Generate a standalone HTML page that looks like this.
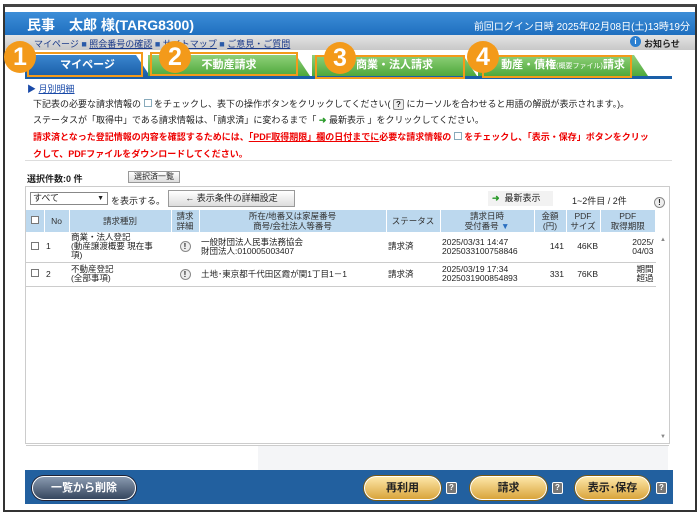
<!DOCTYPE html>
<html><head><meta charset="utf-8"><style>
*{margin:0;padding:0;box-sizing:border-box}
body{width:700px;height:514px;background:#fff;font-family:"Liberation Sans","Noto Sans CJK JP",sans-serif;position:relative;overflow:hidden;color:#222}
.a{position:absolute;white-space:nowrap}
.frame{left:3px;top:4px;width:694px;height:508px;border:2px solid #333;border-top:3px solid #444}
.hdr{left:5px;top:12px;width:690px;height:23px;background:linear-gradient(#3d8ed8,#1f6fbf)}
.links{left:5px;top:35px;width:690px;height:15px;background:linear-gradient(#e4e4e4,#c8c8c8)}
.tab{position:absolute;top:55px;height:21px;color:#fff;font-size:11px;font-weight:bold;text-align:center;line-height:21px;clip-path:polygon(0 0,calc(100% - 14px) 0,100% 100%,0 100%)}
.g{background:linear-gradient(#8fd07a,#4ea83a)}
.orng{position:absolute;border:2.5px solid #f39a1a}
.circ{position:absolute;width:32px;height:32px;border-radius:50%;background:#f39a1a;color:#fff;font-size:25px;font-weight:bold;text-align:center;line-height:32px;font-family:"Liberation Sans",sans-serif}
.t{font-size:9px}
.red{color:#e00;font-weight:bold;font-size:9px}
.btn{position:absolute;border:1px solid #999;background:linear-gradient(#fff,#ddd);font-size:9px;text-align:center}
table{border-collapse:collapse;font-size:8.5px}
th{background:#bcd8ee;font-weight:normal;border-right:1px solid #fff;line-height:10px;color:#333}
td{border-bottom:1px solid #ccc;line-height:9px;padding:1px 2px;vertical-align:middle}
.ex{display:inline-block;width:11px;height:11px;border:1px solid #888;border-radius:50%;font-size:8px;line-height:9px;text-align:center;font-weight:bold;background:#eee}
.cb{display:inline-block;width:8px;height:8px;border:1px solid #777;background:#fff}
.pill{position:absolute;top:476px;height:24px;border-radius:12px;font-size:11px;font-weight:bold;text-align:center;line-height:22px}
.gold{background:linear-gradient(#fde7a8,#d9a43c);border:1.5px solid #fff;color:#222;box-shadow:0 0 0 1px #7a5a10}
.q{position:absolute;top:482px;width:11px;height:12px;background:#777;border:1px solid #fff;color:#fff;font-size:8px;text-align:center;line-height:10px;font-weight:bold;border-radius:2px}
</style></head><body>
<div class="a frame"></div>
<div class="a hdr"></div>
<div class="a" style="left:27px;top:15px;color:#fff;font-size:14px;font-weight:bold">民事　太郎 様(TARG8300)</div>
<div class="a" style="right:10px;top:18px;color:#fff;font-size:10px">前回ログイン日時 2025年02月08日(土)13時19分</div>
<div class="a links"></div>
<div class="a" style="left:34px;top:37px;font-size:9px;color:#1a3a8a">マイページ <span style="color:#2a5aa8">■</span> <u>照会番号の確認</u> <span style="color:#2a5aa8">■</span> <u>サイトマップ</u> <span style="color:#2a5aa8">■</span> <u>ご意見・ご質問</u></div>
<div class="a" style="left:630px;top:36px;width:11px;height:11px;border-radius:50%;background:#2b7fd0;color:#fff;font-size:8px;text-align:center;line-height:11px;font-weight:bold">i</div>
<div class="a" style="left:644px;top:37px;font-size:9px;font-weight:bold">お知らせ</div>
<div class="tab" style="left:25px;width:125px;background:linear-gradient(#3b86cf,#1a5fa8)">マイページ</div>
<div class="tab g" style="left:148px;width:162px">不動産請求</div>
<div class="tab g" style="left:312px;width:165px">商業・法人請求</div>
<div class="tab g" style="left:478px;width:170px">動産・債権<span style="font-size:7px;font-weight:normal">(概要ファイル)</span>請求</div>
<div class="a" style="left:25px;top:76px;width:647px;height:3px;background:#1a5fa8"></div>
<div class="orng" style="left:27px;top:52px;width:116px;height:25px"></div>
<div class="orng" style="left:150px;top:52px;width:148px;height:24px"></div>
<div class="orng" style="left:315px;top:55px;width:150px;height:24px"></div>
<div class="orng" style="left:482px;top:55px;width:150px;height:23px"></div>
<div class="circ" style="left:4px;top:41px">1</div>
<div class="circ" style="left:159px;top:41px">2</div>
<div class="circ" style="left:324px;top:42px">3</div>
<div class="circ" style="left:467px;top:41px">4</div>
<div class="a t" style="left:27px;top:82px;color:#1a4aa8">▶ <u>月別明細</u></div>
<div class="a t" style="left:33px;top:97px">下記表の必要な請求情報の <span class="cb" style="border-color:#8ab"></span> をチェックし、表下の操作ボタンをクリックしてください( <span class="ex" style="border-radius:2px">?</span> にカーソルを合わせると用語の解説が表示されます。)。</div>
<div class="a t" style="left:33px;top:113px">ステータスが「取得中」である請求情報は、「請求済」に変わるまで「 <span style="color:#2a9a2a;font-weight:bold">➜</span> 最新表示 」をクリックしてください。</div>
<div class="a red" style="left:33px;top:130px">請求済となった登記情報の内容を確認するためには、<u>「PDF取得期限」欄の日付までに</u>必要な請求情報の <span class="cb" style="border-color:#8ab"></span> をチェックし、「表示・保存」ボタンをクリッ</div>
<div class="a red" style="left:33px;top:147px">クして、PDFファイルをダウンロードしてください。</div>
<div class="a" style="left:25px;top:160px;width:647px;height:1px;background:#ddd"></div>
<div class="a" style="left:27px;top:172px;font-size:9px;font-weight:bold">選択件数:0 件</div>
<div class="btn" style="left:128px;top:171px;width:52px;height:12px;line-height:10px;font-size:8px">選択済一覧</div>
<div class="a" style="left:25px;top:186px;width:645px;height:258px;border:1px solid #ccc"></div>
<div class="a" style="left:30px;top:192px;width:78px;height:13px;border:1px solid #888;font-size:9px;line-height:11px;padding-left:2px">すべて<span style="position:absolute;right:3px;font-size:7px">▼</span></div>
<div class="a t" style="left:111px;top:194px">を表示する。</div>
<div class="btn" style="left:168px;top:190px;width:127px;height:17px;line-height:15px">← 表示条件の詳細設定</div>
<div class="a" style="left:488px;top:191px;width:65px;height:15px;background:#f2f2f2;font-size:9px;line-height:15px;padding-left:4px"><span style="color:#2a9a2a;font-weight:bold">➜</span>&nbsp; 最新表示</div>
<div class="a t" style="left:572px;top:194px">1~2件目 / 2件</div>
<div class="a" style="left:654px;top:192px"><span class="ex">!</span></div>
<table class="a" style="left:26px;top:210px;width:630px">
<tr style="height:22px"><th style="width:18px"><span class="cb"></span></th><th style="width:25px">No</th><th style="width:102px">請求種別</th><th style="width:28px">請求<br>詳細</th><th style="width:187px">所在/地番又は家屋番号<br>商号/会社法人等番号</th><th style="width:54px">ステータス</th><th style="width:94px">請求日時<br>受付番号 <span style="color:#2a6fc0">▼</span></th><th style="width:32px">金額<br>(円)</th><th style="width:34px">PDF<br>サイズ</th><th>PDF<br>取得期限</th></tr>
<tr style="height:30px;background:#fff"><td style="text-align:center"><span class="cb"></span></td><td>1</td><td>商業・法人登記<br>(動産譲渡概要 現在事<br>項)</td><td style="text-align:center"><span class="ex">!</span></td><td>一般財団法人民事法務協会<br>財団法人:010005003407</td><td>請求済</td><td>2025/03/31 14:47<br>2025033100758846</td><td style="text-align:right">141</td><td style="text-align:right">46KB</td><td style="text-align:right">2025/<br>04/03</td></tr>
<tr style="height:24px;background:#fff"><td style="text-align:center"><span class="cb"></span></td><td>2</td><td>不動産登記<br>(全部事項)</td><td style="text-align:center"><span class="ex">!</span></td><td>土地･東京都千代田区霞が関1丁目1－1</td><td>請求済</td><td>2025/03/19 17:34<br>2025031900854893</td><td style="text-align:right">331</td><td style="text-align:right">76KB</td><td style="text-align:right">期間<br>超過</td></tr>
</table>
<div class="a" style="left:660px;top:237px;font-size:6px;color:#888">▲</div>
<div class="a" style="left:660px;top:434px;font-size:6px;color:#888">▼</div>
<div class="a" style="left:26px;top:445px;width:643px;height:1px;background:#ccc"></div>
<div class="a" style="left:258px;top:446px;width:410px;height:24px;background:#f4f5f7"></div>
<div class="a" style="left:25px;top:470px;width:648px;height:34px;background:#22609f"></div>
<div class="pill" style="left:32px;width:104px;background:linear-gradient(#8a9ab0,#35465e);color:#fff;border:1.5px solid #fff;box-shadow:0 0 0 1px #223">一覧から削除</div>
<div class="pill gold" style="left:364px;width:77px">再利用</div><div class="q" style="left:446px">?</div>
<div class="pill gold" style="left:470px;width:77px">請求</div><div class="q" style="left:552px">?</div>
<div class="pill gold" style="left:575px;width:75px">表示･保存</div><div class="q" style="left:656px">?</div>
</body></html>
